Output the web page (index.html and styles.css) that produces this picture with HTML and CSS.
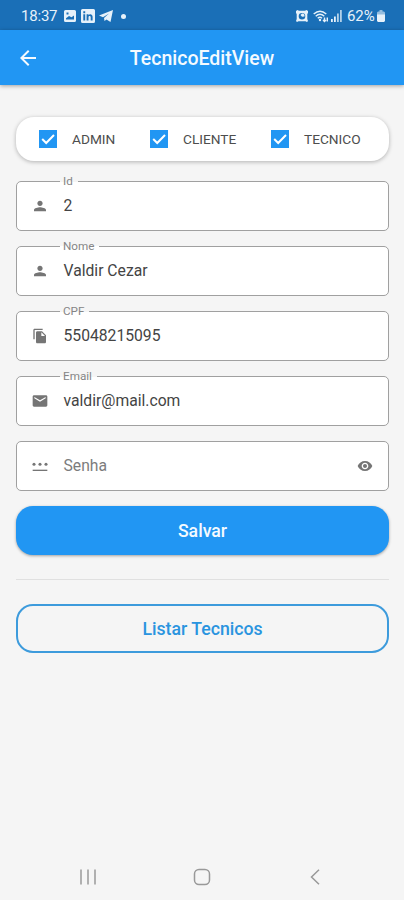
FILE: index.html
```html
<!DOCTYPE html>
<html lang="pt-BR">
<head>
<meta charset="utf-8">
<meta name="viewport" content="width=device-width, initial-scale=1">
<title>TecnicoEditView</title>
<link rel="stylesheet" href="styles.css">
</head>
<body>
<div class="statusbar">
  <span class="clock">18:37</span>
  <svg class="s-image" width="12" height="12" viewBox="0 0 12 12"><path fill="currentColor" fill-rule="evenodd" d="M1.500 0h9A1.500 1.500 0 0 1 12 1.500v9A1.500 1.500 0 0 1 10.500 12h-9A1.500 1.500 0 0 1 0 10.500v-9A1.500 1.500 0 0 1 1.500 0zM2 9.500h8V5.500L7.500 7.300 5 6 2 8.300zM2.500 2.500v2h2v-2z"/></svg>
  <svg class="s-in" width="14" height="14" viewBox="0 0 14 14"><path fill="currentColor" fill-rule="evenodd" d="M1.500 0h11A1.500 1.500 0 0 1 14 1.500v11a1.500 1.500 0 0 1-1.500 1.500h-11A1.500 1.500 0 0 1 0 12.500v-11A1.500 1.500 0 0 1 1.500 0zM2.300 5.300v6.200h1.900V5.300zM2.300 2.300v1.900h1.900V2.300zM5.600 5.300v6.200h1.900V8.300c0-1.800 2.200-1.800 2.200 0v3.200h1.900V7.800c0-3-3-3.300-4.100-1.700v-.8z"/></svg>
  <svg class="s-plane" width="14" height="12" viewBox="0 0 14 12"><path fill="currentColor" d="M14 0 11.500 12 7.500 9.500 5.500 11 5 8 10 3.500 4 7.300 0 5.500z"/></svg>
  <span class="dot"></span>
  <svg class="s-alarm" width="12" height="12" viewBox="0 0 12 12"><path fill="currentColor" fill-rule="evenodd" d="M0 1 1.500 0 3 .8h6L10.500 0 12 1v2l-.7 1v5L12 11l-1 1-1.500-.8h-7L1 12l-1-1 .7-2V4L0 3zM6 3a3.300 3.300 0 1 0 0 6.600A3.300 3.300 0 0 0 6 3zM6 3.600a2.700 2.700 0 0 1 2.500 3L6 6.800 4.500 5z"/></svg>
  <svg class="s-wifi" width="16" height="13" viewBox="0 0 16 13"><g fill="none" stroke="currentColor" stroke-width="1.400"><path d="M.7 4Q7 -1.500 13.300 4M2.700 6.200Q7 2.500 11.300 6.200M4.700 8.300Q7 6.400 9 8.300"/><path d="M11.500 11.500V7.500M10 10l1.500 1.500L13 10M14.300 11.500V7.500"/></g><circle cx="7" cy="10" r="1.200" fill="currentColor"/></svg>
  <svg class="s-signal" width="11" height="12" viewBox="0 0 11 12"><path fill="currentColor" d="M0 9h1.800v3H0zM3 6.500h1.800V12H3z"/><path fill="currentColor" opacity=".75" d="M6 3.500h1.800V12H6zM9 0h1.800v12H9z"/></svg>
  <span class="percent">62%</span>
  <svg class="s-batt" width="8" height="12" viewBox="0 0 8 12"><path fill="currentColor" opacity=".6" d="M2.500 0h3v1.500H7L8 2.500V5H0V2.500L1 1.500h1.500z"/><path fill="currentColor" d="M0 4.500h8V11l-1 1H1l-1-1z"/></svg>
</div>
<header class="appbar">
  <svg class="back" width="16" height="16" viewBox="4 4 16 16"><path fill="currentColor" d="M20 11H7.830l5.590-5.590L12 4l-8 8 8 8 1.410-1.410L7.830 13H20z"/></svg>
  <h1>TecnicoEditView</h1>
</header>
<main>
  <div class="roles">
    <div class="role"><svg class="check" viewBox="0 0 18 18"><path d="M0 0h18v18H0z" fill="#2196f3"/><path d="m3.200 9 4 4 7.800-8" fill="none" stroke="#fff" stroke-width="2"/></svg><span>ADMIN</span></div>
    <div class="role"><svg class="check" viewBox="0 0 18 18"><path d="M0 0h18v18H0z" fill="#2196f3"/><path d="m3.200 9 4 4 7.800-8" fill="none" stroke="#fff" stroke-width="2"/></svg><span>CLIENTE</span></div>
    <div class="role"><svg class="check" viewBox="0 0 18 18"><path d="M0 0h18v18H0z" fill="#2196f3"/><path d="m3.200 9 4 4 7.800-8" fill="none" stroke="#fff" stroke-width="2"/></svg><span>TECNICO</span></div>
  </div>
  <div class="field"><label>Id</label><svg class="icon" viewBox="0 0 24 24"><path d="M12 12c2.210 0 4-1.790 4-4s-1.790-4-4-4-4 1.790-4 4 1.790 4 4 4zm0 2c-3 0-9 1.340-9 4v2h18v-2c0-2.660-6-4-9-4z"/></svg><span class="value">2</span></div>
  <div class="field"><label>Nome</label><svg class="icon" viewBox="0 0 24 24"><path d="M12 12c2.210 0 4-1.790 4-4s-1.790-4-4-4-4 1.790-4 4 1.790 4 4 4zm0 2c-3 0-9 1.340-9 4v2h18v-2c0-2.660-6-4-9-4z"/></svg><span class="value">Valdir Cezar</span></div>
  <div class="field"><label>CPF</label><svg class="icon" viewBox="0 0 24 24"><path d="M16 1H4c-1.100 0-2 .9-2 2v14h2V3h12V1zm-1 4 6 6v10c0 1.100-.9 2-2 2H7.990C6.890 23 6 22.100 6 21l.01-14c0-1.100.89-2 1.990-2h7zm-1 7h5.500L14 6.500V12z"/></svg><span class="value">55048215095</span></div>
  <div class="field"><label>Email</label><svg class="icon" viewBox="0 0 24 24"><path d="M21 3.500H3c-1.100 0-2 .9-2 2v13c0 1.100.9 2 2 2h18c1.100 0 2-.9 2-2v-13c0-1.100-.9-2-2-2zm-.5 4.500L12 13 3.500 8V6l8.500 5 8.500-5v2z"/></svg><span class="value">valdir@mail.com</span></div>
  <div class="field"><svg class="icon" viewBox="0 0 24 24"><path d="M1 17.500h22v2H1z"/><circle cx="3" cy="9.500" r="2.300"/><circle cx="12" cy="9.500" r="2.300"/><circle cx="21" cy="9.500" r="2.300"/></svg><span class="value hint">Senha</span><svg class="icon eye" viewBox="0 0 24 24"><path d="M12 4.500C7 4.500 2.730 7.610 1 12c1.730 4.390 6 7.500 11 7.500s9.270-3.110 11-7.500c-1.730-4.390-6-7.500-11-7.500zM12 17c-2.760 0-5-2.240-5-5s2.240-5 5-5 5 2.240 5 5-2.240 5-5 5zm0-8c-1.660 0-3 1.340-3 3s1.340 3 3 3 3-1.340 3-3-1.340-3-3-3z"/></svg></div>
  <button class="btn save">Salvar</button>
  <hr>
  <button class="btn list">Listar Tecnicos</button>
</main>
<nav class="navbar">
  <svg width="16" height="16" viewBox="0 0 16 16"><path d="M1 .5v15M8 .5v15M15 .5v15"/></svg>
  <svg width="18" height="18" viewBox="0 0 18 18"><rect x="1.500" y="1.500" width="15" height="15" rx="4.500"/></svg>
  <svg width="10" height="16" viewBox="0 0 10 16"><path d="M9 .7 1.500 8 9 15.300"/></svg>
</nav>
</body>
</html>
```
FILE: styles.css
```css
* { box-sizing: border-box; }
body {
  margin: 0;
  height: 900px;
  display: flex;
  flex-direction: column;
  overflow: hidden;
  background: #f5f5f5;
  font-family: Roboto, "Liberation Sans", sans-serif;
  color: #444;
}
svg { display: block; flex: none; }
.statusbar {
  height: 30px;
  flex: none;
  display: flex;
  align-items: center;
  padding: 2px 19px 0 21px;
  background: #1a6fb7;
  color: #e6f1fa;
  font-size: 15px;
}
.clock { width: 43px; letter-spacing: -0.2px; }
.s-in { margin-left: 5px; }
.s-plane { margin-left: 4px; }
.dot { width: 5px; height: 5px; margin-left: 8px; border-radius: 50%; background: currentColor; }
.s-alarm { margin-left: auto; }
.s-wifi { margin-left: 5px; }
.s-signal { margin-left: 2px; }
.percent { width: 29px; margin-left: 5px; letter-spacing: -0.1px; }
.s-batt { margin-left: 1px; }
.appbar {
  height: 55px;
  flex: none;
  display: flex;
  align-items: center;
  padding: 1px 20px 0;
  background: #2196f3;
  color: #f4faff;
  box-shadow: 0 1px 4px rgba(0, 0, 0, .35);
}
.appbar h1 {
  flex: 1;
  margin: 2px 16px 0 0;
  text-align: center;
  font-size: 19.5px;
  line-height: 24px;
  font-weight: 500;
}
main { flex: 1; padding: 32px 15px 0 16px; }
.roles {
  display: grid;
  grid-template-columns: 111px 121px 1fr;
  align-items: center;
  height: 44px;
  margin-bottom: 20px;
  padding-left: 23px;
  border-radius: 18px;
  background: #fff;
  box-shadow: 0 1px 4px rgba(0, 0, 0, .28);
}
.role { display: flex; align-items: center; gap: 15px; font-size: 13.7px; color: #4d4d4d; }
.check { width: 18px; height: 18px; }
.field {
  position: relative;
  display: flex;
  align-items: center;
  height: 50px;
  margin-bottom: 15px;
  padding: 0 15px 1px;
  border: 1px solid #a0a0a0;
  border-radius: 5px;
  background: #fff;
}
.field label {
  position: absolute;
  left: 43px;
  top: -7px;
  padding: 0 5px 0 3px;
  background: linear-gradient(#f5f5f5 50%, #fff 50%);
  font-size: 11.7px;
  line-height: 13px;
  color: #858585;
}
.icon { width: 16px; height: 16px; fill: #757575; }
.value { flex: 1; margin-left: 15.500px; font-size: 15.7px; line-height: 20px; }
.hint { color: #7c7c7c; }
.btn {
  display: block;
  width: 100%;
  height: 49px;
  padding: 0;
  border-radius: 17px;
  font: 500 17.7px/20px Roboto, "Liberation Sans", sans-serif;
}
.save { border: 0; background: #2196f3; color: #f4faff; box-shadow: 0 1px 3px rgba(0, 0, 0, .35); }
hr { height: 1px; margin: 24px 0; border: 0; background: #e0e0e0; }
.list { border: 2px solid #3d9bdc; background: transparent; color: #2a94df; }
.navbar {
  height: 46px;
  flex: none;
  display: flex;
  align-items: center;
  justify-content: space-between;
  padding: 0 84px 0 80px;
  fill: none;
  stroke: #999;
  stroke-width: 1.500;
}
.navbar svg:nth-child(2) { margin-right: 3px; }
```
